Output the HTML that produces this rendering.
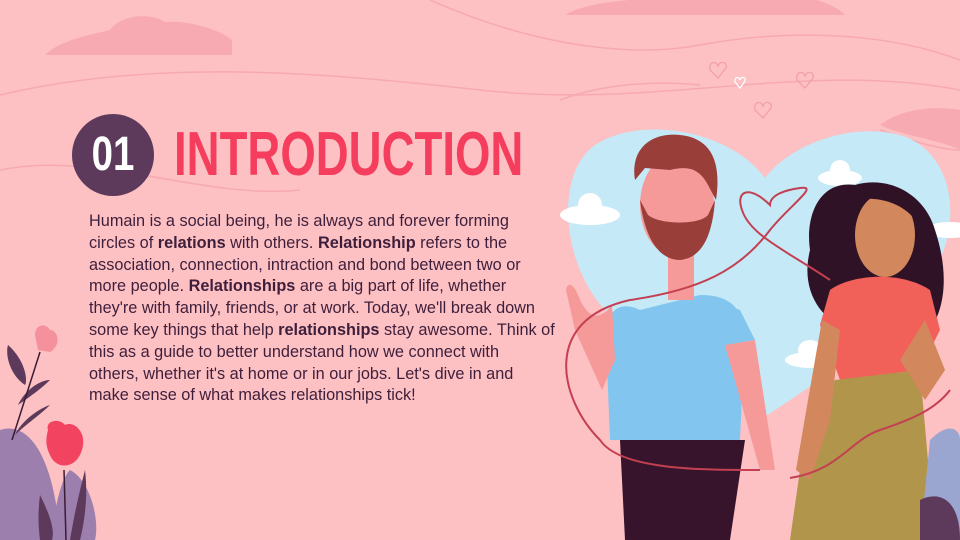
<!DOCTYPE html>
<html><head><meta charset="utf-8"><style>
html,body{margin:0;padding:0}
body{width:960px;height:540px;overflow:hidden;background:#fdc0c3;position:relative;font-family:"Liberation Sans",sans-serif}
svg.bg{position:absolute;left:0;top:0}
.circ{position:absolute;left:72px;top:114px;width:82px;height:82px;border-radius:50%;background:#5d3a5b}
.circ span{position:absolute;left:0;top:0;width:82px;text-align:center;color:#fff;font:bold 48px/82px "Liberation Sans",sans-serif;transform:scaleX(0.8)}
.title{position:absolute;left:174px;top:124px;color:#f53e5e;font:bold 62px/62px "Liberation Sans",sans-serif;transform:scaleX(0.735);transform-origin:left;white-space:nowrap}
.txt{position:absolute;left:89px;top:211px;color:#3e1f3b;font-size:16.3px;line-height:21.8px;white-space:nowrap}
</style></head><body>
<svg class="bg" width="960" height="540" viewBox="0 0 960 540">
<g fill="none" stroke="#f6a9b1" stroke-width="1.5">
<path d="M0 95 C150 60 300 70 480 90 S800 60 960 90"/>
<path d="M430 0 C520 40 620 60 700 45 S880 30 960 60"/>
<path d="M0 170 C100 150 200 200 300 190"/>
<path d="M560 100 C600 85 650 80 700 85"/>
<path d="M880 130 C910 140 940 150 960 150"/>
</g>
<path d="M45 55 C60 40 90 35 110 30 C120 15 150 12 165 22 C190 20 220 30 232 40 L232 55 Z" fill="#f8aab2"/>
<path d="M565 15 C590 0 640 0 680 -5 L800 -5 C820 0 840 8 845 15 Z" fill="#f8aab2"/>
<path d="M880 125 C900 110 930 105 960 110 L960 150 C940 140 900 135 880 125Z" fill="#f8aab2"/>
<path d="M765 178 C730 130 640 115 595 145 C560 170 560 240 590 290 C620 340 700 380 760 420 C820 380 900 330 935 270 C965 215 950 150 900 135 C850 122 790 145 765 178Z" fill="#c5e9f7"/>
<g fill="#fff">
<ellipse cx="590" cy="215" rx="30" ry="10"/><ellipse cx="590" cy="205" rx="12" ry="12"/>
<ellipse cx="840" cy="178" rx="22" ry="8"/><ellipse cx="840" cy="170" rx="10" ry="10"/>
<ellipse cx="810" cy="360" rx="25" ry="8"/><ellipse cx="810" cy="350" rx="12" ry="10"/>
<ellipse cx="950" cy="230" rx="25" ry="8"/>
</g>
<g fill="none" stroke="#f2a0aa" stroke-width="1.3"><path d="M710 70 l8 8 l8-10 c2-6-6-8-8-2 c-2-6-10-4-8 4z"/><path d="M755 110 l8 8 l8-10 c2-6-6-8-8-2 c-2-6-10-4-8 4z"/><path d="M797 80 l8 8 l8-10 c2-6-6-8-8-2 c-2-6-10-4-8 4z"/></g>
<path d="M735 82 l5 6 l5-7 c1-4-4-5-5-1 c-1-4-6-3-5 2z" fill="none" stroke="#fff" stroke-width="1.3"/>
<path d="M640 310 C620 300 605 310 606 340 L610 440 L740 440 L745 330 C740 300 720 295 700 295Z" fill="#82c6ef"/>
<path d="M620 440 L745 440 L730 540 L625 540Z" fill="#37142b"/>
<path d="M700 295 L740 310 L755 340 L725 345Z" fill="#82c6ef"/>
<path d="M725 345 L755 340 L775 470 L760 470Z" fill="#f59a98"/>
<path d="M612 305 C600 320 590 320 580 300 C575 285 568 280 566 290 L575 330 L602 390 L615 360Z" fill="#f59a98"/>
<rect x="668" y="255" width="26" height="45" fill="#f59a98"/>
<ellipse cx="677" cy="205" rx="37" ry="52" fill="#f59a98"/>
<path d="M640 200 C645 240 660 260 680 260 C700 258 712 240 715 200 L708 215 C700 225 660 225 648 215Z" fill="#9a3e3a"/>
<path d="M635 180 C630 150 650 132 680 135 C710 138 722 160 716 200 L708 185 C700 170 690 165 670 170 L645 168 Z" fill="#9a3e3a"/>
<path d="M855 185 C820 180 805 215 810 250 C800 290 820 320 850 330 L930 330 C950 300 945 260 935 230 C925 195 890 175 855 185Z" fill="#2f1226"/>
<ellipse cx="885" cy="235" rx="30" ry="42" fill="#d2875c"/>
<path d="M855 200 C880 195 905 205 915 220 L920 205 C905 185 870 182 855 200Z" fill="#2f1226"/>
<path d="M830 290 C850 275 900 270 930 290 L940 330 L920 370 L840 380 L820 325Z" fill="#f2605a"/>
<path d="M835 380 L920 370 L935 540 L790 540 L800 470Z" fill="#b0954b"/>
<path d="M822 320 L840 330 L830 420 L810 480 L796 470 L808 400Z" fill="#d2875c"/>
<path d="M925 320 L945 370 L925 400 L900 360Z" fill="#d2875c"/>
<path d="M930 440 C950 420 960 430 960 440 L960 540 L920 540Z" fill="#9aa6cf"/>
<path d="M920 500 C940 490 960 500 960 540 L920 540Z" fill="#5d3a5b"/>
<g fill="none" stroke="#c24052" stroke-width="2">
<path d="M760 470 C700 470 620 470 600 440 C560 400 540 320 630 300 C700 290 740 270 770 230 C790 205 820 185 800 188 C785 190 770 195 770 205 C750 185 735 190 742 210 C750 235 785 250 830 280"/>
<path d="M790 478 C840 470 850 440 880 430 C910 420 935 410 950 390"/>
</g>
<path d="M0 430 C30 420 55 460 60 540 L0 540Z" fill="#9d7fad"/>
<path d="M70 470 C90 480 100 520 95 540 L50 540 C55 510 60 480 70 470Z" fill="#9d7fad"/>
<g fill="#5d3a5b">
<path d="M8 345 C25 360 28 380 25 385 C10 375 5 355 8 345Z"/>
<path d="M50 380 C40 390 25 400 18 405 C25 390 40 380 50 380Z"/>
<path d="M50 405 C40 415 25 425 15 435 C22 420 40 408 50 405Z"/>
<path d="M40 495 C50 515 55 530 52 540 L40 540 C38 525 38 510 40 495Z"/>
<path d="M85 470 C80 490 75 510 70 540 L80 540 C85 520 88 495 85 470Z"/>
</g>
<path d="M40 352 L12 440" stroke="#3a1c35" stroke-width="1.5"/>
<path d="M64 470 L66 540" stroke="#3a1c35" stroke-width="1.5"/>
<path d="M35 335 C35 325 45 322 50 330 C58 330 62 345 50 352 L38 350Z" fill="#f5909d"/>
<path d="M48 430 C45 420 60 418 65 425 C75 420 90 435 80 455 C72 470 55 468 50 455 C45 445 46 438 48 430Z" fill="#f24460"/>
</svg>
<div class="circ"><span>01</span></div>
<div class="title">INTRODUCTION</div>
<div class="txt">Humain is a social being, he is always and forever forming<br>circles of <b>relations</b> with others. <b>Relationship</b> refers to the<br>association, connection, intraction and bond between two or<br>more people. <b>Relationships</b> are a big part of life, whether<br>they're with family, friends, or at work. Today, we'll break down<br>some key things that help <b>relationships</b> stay awesome. Think of<br>this as a guide to better understand how we connect with<br>others, whether it's at home or in our jobs. Let's dive in and<br>make sense of what makes relationships tick!</div>
</body></html>
